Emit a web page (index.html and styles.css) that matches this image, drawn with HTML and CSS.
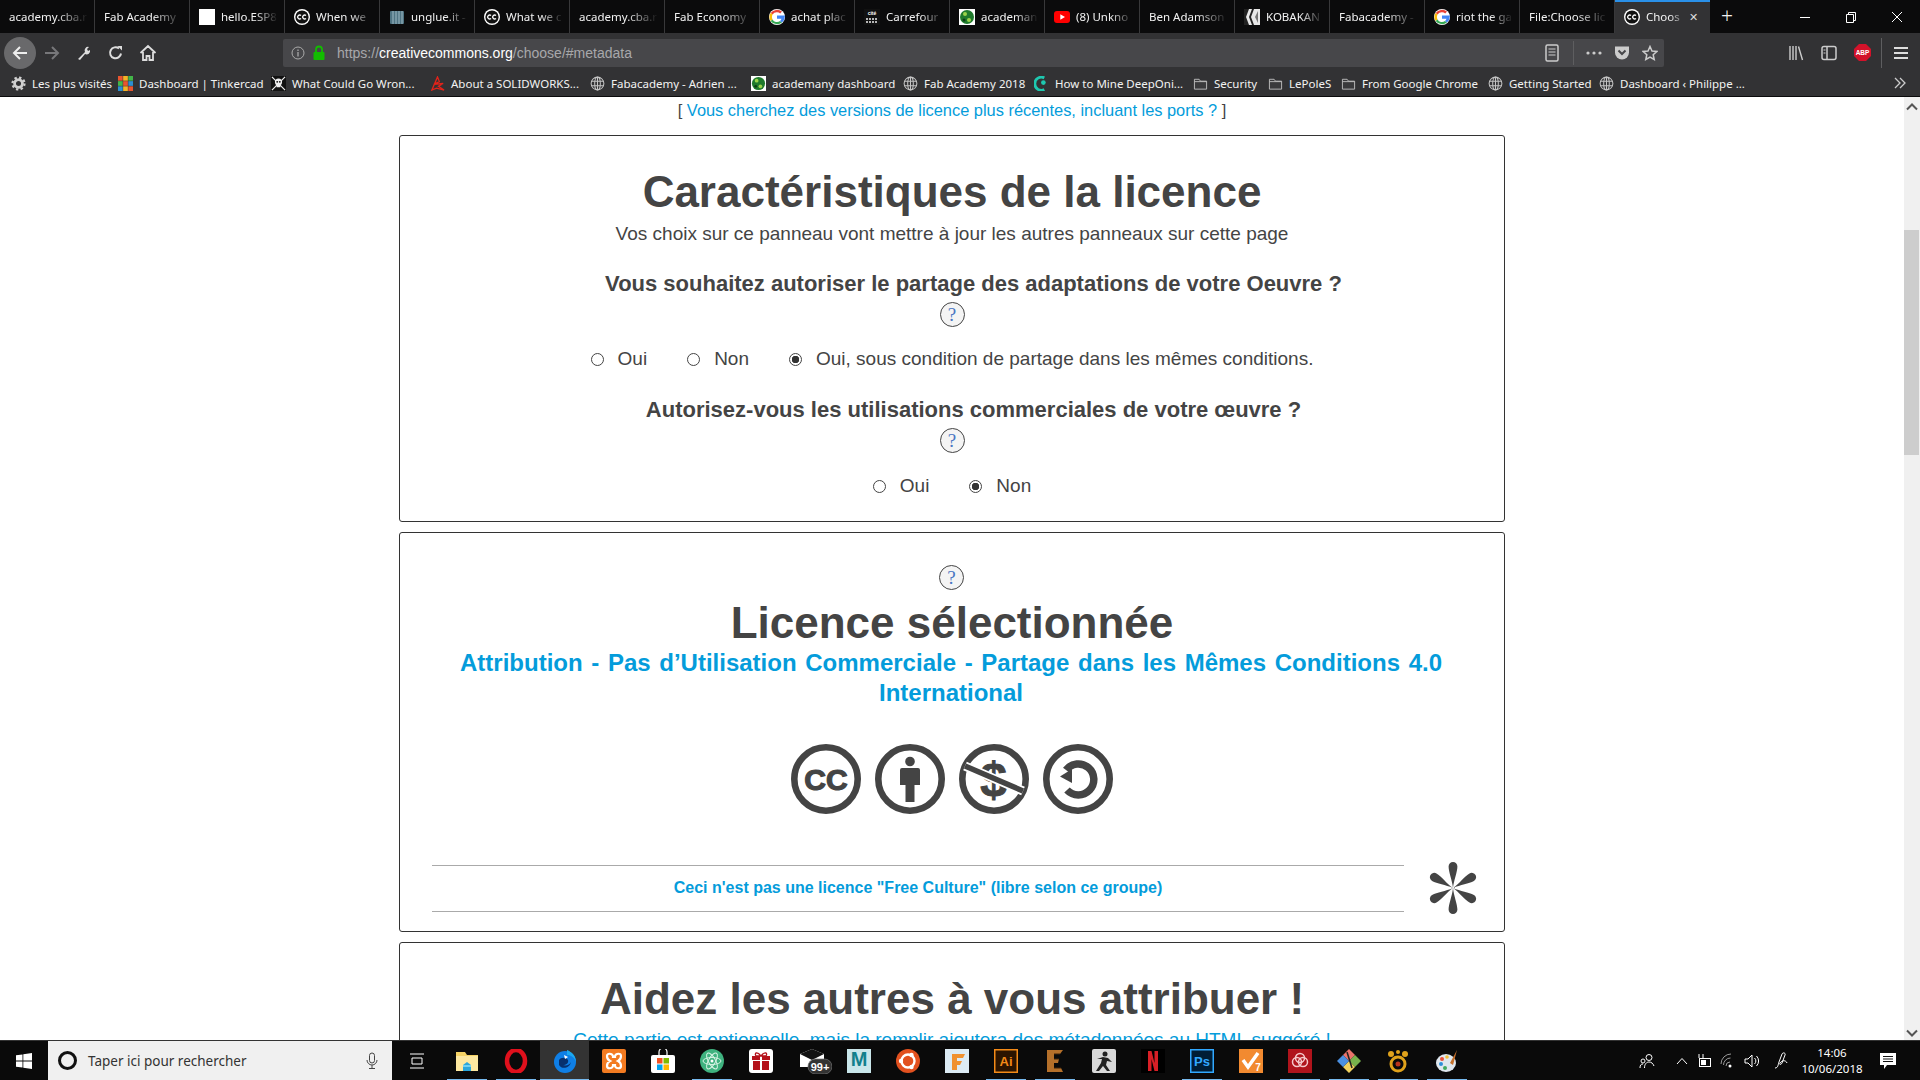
FILE: index.html
```html
<!DOCTYPE html>
<html lang="fr">
<head>
  <meta charset="UTF-8">
  <title>Choose a License</title>
  <link rel="stylesheet" href="styles.css">
</head>
<body>
  <svg class="sprites" xmlns="http://www.w3.org/2000/svg">
    <symbol id="i-cc" viewBox="0 0 16 16"><circle cx="8" cy="8" r="8" fill="#fff"/><circle cx="8" cy="8" r="6.600" fill="#111"/><path d="M7 6.500a2 2 0 1 0 0 3M12 6.500a2 2 0 1 0 0 3" fill="none" stroke="#fff" stroke-width="1.400"/></symbol>
    <symbol id="i-google" viewBox="0 0 16 16"><circle cx="8" cy="8" r="8" fill="#fff"/><path d="M8 3.200a4.800 4.800 0 0 1 3.200 1.200L13 2.600A8 8 0 0 0 1.600 4l2 1.600A4.800 4.800 0 0 1 8 3.200z" fill="#ea4335"/><path d="M3.600 5.600L1.600 4a8 8 0 0 0 0 8l2-1.600a4.800 4.800 0 0 1 0-4.800z" fill="#fbbc05"/><path d="M3.600 10.400l-2 1.600A8 8 0 0 0 13 13.400l-2-1.500a4.800 4.800 0 0 1-7.400-1.500z" fill="#34a853"/><path d="M15.800 6.500H8v3.200h4.500A4 4 0 0 1 11 11.900l2 1.500a8 8 0 0 0 2.800-6.900z" fill="#4285f4"/></symbol>
    <symbol id="i-globe" viewBox="0 0 16 16"><g fill="none" stroke="#c4c4c4" stroke-width="1.100"><circle cx="8" cy="8" r="6.800"/><ellipse cx="8" cy="8" rx="3" ry="6.800"/><path d="M1.500 5.500h13M1.500 10.500h13M8 1v14"/></g></symbol>
    <symbol id="i-folder" viewBox="0 0 16 16"><path d="M1.500 3.500h5l1.500 2h6.500v8.500h-13z" fill="#3a3a3c" stroke="#bdbdbd"/><path d="M1.500 6h13" stroke="#bdbdbd"/></symbol>
    <symbol id="i-gear" viewBox="0 0 16 16"><circle cx="8" cy="8" r="4.200" fill="none" stroke="#d0d0d0" stroke-width="3"/><circle cx="8" cy="8" r="6.400" fill="none" stroke="#d0d0d0" stroke-width="2.400" stroke-dasharray="2.500 2.500"/></symbol>
    <symbol id="i-tinker" viewBox="0 0 16 16"><rect width="5" height="5" fill="#e8552f"/><rect x="5.500" width="5" height="5" fill="#f5b325"/><rect x="11" width="5" height="5" fill="#43b649"/><rect y="5.500" width="5" height="5" fill="#43b649"/><rect x="5.500" y="5.500" width="5" height="5" fill="#e8552f"/><rect x="11" y="5.500" width="5" height="5" fill="#2c8fd1"/><rect y="11" width="5" height="5" fill="#2c8fd1"/><rect x="5.500" y="11" width="5" height="5" fill="#f5b325"/><rect x="11" y="11" width="5" height="5" fill="#e8552f"/></symbol>
    <symbol id="i-skull" viewBox="0 0 16 16"><rect width="16" height="16" fill="#111"/><circle cx="8" cy="6.500" r="3.800" fill="#eee"/><rect x="6" y="9" width="4" height="3" fill="#eee"/><path d="M1 1l14 14M15 1L1 15" stroke="#eee" stroke-width="1.300"/><circle cx="6.600" cy="6.200" r="1" fill="#111"/><circle cx="9.400" cy="6.200" r="1" fill="#111"/></symbol>
    <symbol id="i-solid" viewBox="0 0 16 16"><path d="M2 15L8 1l2 5-6 3 10-1-5 3 6 4-8-2z" fill="none" stroke="#e2231a" stroke-width="1.400"/></symbol>
    <symbol id="i-academany" viewBox="0 0 16 16"><rect width="16" height="16" fill="#fff"/><circle cx="8" cy="8" r="7" fill="#1f7a2c"/><circle cx="6" cy="5" r="2" fill="#9bd34a"/><circle cx="10" cy="11" r="2" fill="#9bd34a"/><circle cx="5" cy="11" r="1.500" fill="#0c3f16"/></symbol>
    <symbol id="i-deep" viewBox="0 0 16 16"><path d="M11 2A7 7 0 1 0 11 14.500" fill="none" stroke="#1ec8b0" stroke-width="3"/><circle cx="10" cy="7" r="2.500" fill="#1ec8b0"/></symbol>
    <symbol id="i-unglue" viewBox="0 0 16 16"><rect x="1" y="2" width="14" height="13" rx="1" fill="#4f7483"/><path d="M4 2v13M7 2v13M10 2v13M13 2v13" stroke="#9fb9c4"/></symbol>
    <symbol id="i-youtube" viewBox="0 0 16 16"><rect y="2" width="16" height="12" rx="3" fill="#f00"/><path d="M6.300 5.200L11 8l-4.700 2.800z" fill="#fff"/></symbol>
    <symbol id="i-koba" viewBox="0 0 16 16"><rect width="16" height="16" fill="#e8e8e8"/><path d="M0 0h5l-3 8 3 8H0zM8 0h2L7 8l3 8H8L5 8z" fill="#222"/><path d="M14 2L11 8l3 6z" fill="#777"/></symbol>

    <symbol id="t-folder" viewBox="0 0 24 24"><path d="M1 3h9l2 3h11v16H1z" fill="#f6d365"/><path d="M1 7h22v15H1z" fill="#fde8a0"/><path d="M8 22v-6l4-3 4 3v6z" fill="#2aa6dc"/><path d="M8 16h8v2H8z" fill="#6fd0f2"/></symbol>
    <symbol id="t-opera" viewBox="0 0 24 24"><ellipse cx="12" cy="12" rx="9" ry="11" fill="none" stroke="#e0101c" stroke-width="4.500"/></symbol>
    <symbol id="t-firefox" viewBox="0 0 24 24"><circle cx="12" cy="13" r="11" fill="#0f7fe6"/><path d="M14 1c5 2 9 6 9 12-2-5-5-7-9-7z" fill="#1ba9f0"/><path d="M6 11c2-3 7-3 9 0 1 3-2 5-5 5 3 1 7 0 8-3-1 6-9 8-12 3z" fill="#07306e"/><path d="M11 6l4 2-3 2z" fill="#fff"/></symbol>
    <symbol id="t-xampp" viewBox="0 0 24 24"><rect width="24" height="24" rx="2" fill="#f37b21"/><path d="M5 7c0-3 5-3 6 0v1h2V7c1-3 6-3 6 0 0 2-1 4-3 5 2 1 3 3 3 5 0 3-5 3-6 0v-1h-2v1c-1 3-6 3-6 0 0-2 1-4 3-5-2-1-3-3-3-5z" fill="none" stroke="#fff" stroke-width="2.200"/></symbol>
    <symbol id="t-store" viewBox="0 0 24 24"><path d="M8 6V3a4 4 0 0 1 8 0v3" fill="none" stroke="#fff" stroke-width="1.200"/><rect y="6" width="24" height="18" rx="2" fill="#fff"/><rect x="6" y="9" width="5.500" height="5.500" fill="#f25022"/><rect x="12.500" y="9" width="5.500" height="5.500" fill="#7fba00"/><rect x="6" y="15.500" width="5.500" height="5.500" fill="#00a4ef"/><rect x="12.500" y="15.500" width="5.500" height="5.500" fill="#ffb900"/></symbol>
    <symbol id="t-atom" viewBox="0 0 24 24"><circle cx="12" cy="12" r="12" fill="#3fb27f"/><g fill="none" stroke="#d7f3e4"><ellipse cx="12" cy="12" rx="9" ry="3.500"/><ellipse cx="12" cy="12" rx="9" ry="3.500" transform="rotate(60 12 12)"/><ellipse cx="12" cy="12" rx="9" ry="3.500" transform="rotate(120 12 12)"/></g><circle cx="12" cy="12" r="1.500" fill="#fff"/></symbol>
    <symbol id="t-gift" viewBox="0 0 24 24"><rect width="24" height="24" rx="3" fill="#fff"/><rect x="3" y="7" width="18" height="4" fill="#b5121b"/><rect x="4" y="12" width="16" height="9" fill="#b5121b"/><rect x="11" y="7" width="2" height="14" fill="#fff"/><path d="M12 7C8 2 5 4 7 7zM12 7c4-5 7-3 5 0z" fill="none" stroke="#b5121b" stroke-width="1.300"/></symbol>
    <symbol id="t-ubuntu" viewBox="0 0 24 24"><circle cx="12" cy="12" r="12" fill="#e2511f"/><circle cx="12" cy="12" r="6.500" fill="none" stroke="#fff" stroke-width="2.400"/><circle cx="5" cy="12" r="2.200" fill="#fff"/><circle cx="15.500" cy="6" r="2.200" fill="#fff"/><circle cx="15.500" cy="18" r="2.200" fill="#fff"/></symbol>
    <symbol id="t-fusion" viewBox="0 0 24 24"><rect width="24" height="24" fill="#dcebf4"/><path d="M7 21V5h13l-2 4h-6v3h5l-2 4h-3v5z" fill="#f0912f"/></symbol>
    <symbol id="t-e" viewBox="0 0 24 24"><path d="M4 1h16l-3 4h-6v5h5l-1 4h-4v5h7l2 4H4z" fill="#b5702a"/><path d="M11 5h6M11 10h5M11 19h7" stroke="#3e2208"/></symbol>
    <symbol id="t-zbrush" viewBox="0 0 24 24"><rect width="24" height="24" rx="2" fill="#d9d9d9"/><circle cx="13" cy="5" r="2.500" fill="#222"/><path d="M5 10l6-2 5 1 4 4-5-1-1 4 4 6h-3l-4-5-4 5H4l5-8 1-4z" fill="#222"/></symbol>
    <symbol id="t-netflix" viewBox="0 0 24 24"><rect width="24" height="24" fill="#000"/><path d="M7 2h3.500l3 12V2H17v20h-3.500l-3-12v12H7z" fill="#d81f26"/></symbol>
    <symbol id="t-adobe" viewBox="0 0 24 24"><rect width="24" height="24" fill="#b0141c"/><g fill="none" stroke="#f4c9cb" stroke-width="1.500"><circle cx="9" cy="13" r="4.500"/><circle cx="15" cy="13" r="4.500"/><circle cx="12" cy="9" r="4.500"/></g></symbol>
    <symbol id="t-git" viewBox="0 0 24 24"><path d="M12 0l6 6-6 6-6-6z" fill="#e9736b"/><path d="M18 6l6 6-6 6-6-6z" fill="#78b24d"/><path d="M12 12l6 6-6 6-6-6z" fill="#f2d25e"/><path d="M6 6l6 6-6 6-6-6z" fill="#4a90e2"/><path d="M10 3l5 16" stroke="#222" stroke-width="1.500"/></symbol>
    <symbol id="t-gimp" viewBox="0 0 24 24"><circle cx="12" cy="15" r="7" fill="none" stroke="#e0a21b" stroke-width="3"/><circle cx="12" cy="15" r="2.500" fill="#b8331c"/><circle cx="5" cy="5" r="3" fill="#e0a21b"/><circle cx="19" cy="5" r="3" fill="#e0a21b"/><circle cx="12" cy="3" r="2" fill="#e0a21b"/></symbol>
    <symbol id="t-paint" viewBox="0 0 24 24"><ellipse cx="11" cy="14" rx="10" ry="9" fill="#dfe7ee"/><circle cx="7" cy="10" r="2" fill="#e94f37"/><circle cx="6" cy="15" r="2" fill="#2f8fd8"/><circle cx="10" cy="19" r="2" fill="#41a85f"/><circle cx="12" cy="8" r="1.800" fill="#f2c037"/><path d="M22 1l-7 13 3 2z" fill="#c6702a"/></symbol>
  </svg>

  <header class="browser">
    <div class="tabstrip">
      <div class="tab"><span class="tab-label">academy.cba.r</span></div>
      <div class="tab"><span class="tab-label">Fab Academy</span></div>
      <div class="tab"><span class="favicon favicon-blank"></span><span class="tab-label">hello.ESP8</span></div>
      <div class="tab"><svg class="favicon"><use href="#i-cc"/></svg><span class="tab-label">When we</span></div>
      <div class="tab"><svg class="favicon"><use href="#i-unglue"/></svg><span class="tab-label">unglue.it -</span></div>
      <div class="tab"><svg class="favicon"><use href="#i-cc"/></svg><span class="tab-label">What we c</span></div>
      <div class="tab"><span class="tab-label">academy.cba.r</span></div>
      <div class="tab"><span class="tab-label">Fab Economy</span></div>
      <div class="tab"><svg class="favicon"><use href="#i-google"/></svg><span class="tab-label">achat plac</span></div>
      <div class="tab"><svg class="favicon" viewBox="0 0 16 16"><rect width="16" height="16" fill="#111"/><text x="8" y="6" class="fav-cite">cité</text><path d="M2 10h12M2 13h12" stroke="#eee" stroke-width="1.500" stroke-dasharray="2 1"/></svg><span class="tab-label">Carrefour</span></div>
      <div class="tab"><svg class="favicon"><use href="#i-academany"/></svg><span class="tab-label">academan</span></div>
      <div class="tab"><svg class="favicon"><use href="#i-youtube"/></svg><span class="tab-label">(8) Unkno</span></div>
      <div class="tab"><span class="tab-label">Ben Adamson</span></div>
      <div class="tab"><svg class="favicon"><use href="#i-koba"/></svg><span class="tab-label">KOBAKAN</span></div>
      <div class="tab"><span class="tab-label">Fabacademy -</span></div>
      <div class="tab"><svg class="favicon"><use href="#i-google"/></svg><span class="tab-label">riot the ga</span></div>
      <div class="tab"><span class="tab-label">File:Choose lic</span></div>
      <div class="tab tab-active"><svg class="favicon"><use href="#i-cc"/></svg><span class="tab-label">Choos</span><span class="tab-close">✕</span></div>
      <div class="tab-new">+</div>
      <div class="window-controls">
        <svg width="12" height="12" viewBox="0 0 12 12"><path d="M1 6.500h10" stroke="#fff"/></svg>
        <svg width="12" height="12" viewBox="0 0 12 12"><path d="M1.500 3.500h7v8h-7zM3.500 3.500v-2h7v8h-2" fill="none" stroke="#fff"/></svg>
        <svg width="12" height="12" viewBox="0 0 12 12"><path d="M1 1l10 10M11 1L1 11" stroke="#fff"/></svg>
      </div>
    </div>

    <div class="toolbar">
      <div class="nav-btn nav-back"><svg width="18" height="18" viewBox="0 0 18 18"><path d="M16 9H3M9 3L3 9l6 6" fill="none" stroke="#eee" stroke-width="2"/></svg></div>
      <div class="nav-btn"><svg width="18" height="18" viewBox="0 0 18 18"><path d="M2 9h13M9 3l6 6-6 6" fill="none" stroke="#77777a" stroke-width="2"/></svg></div>
      <div class="nav-btn"><svg width="16" height="16" viewBox="0 0 16 16"><path d="M2 14l7-7a3.500 3.500 0 0 1 4-5l-2 2 1 2 2-1a3.500 3.500 0 0 1-5 4l-5 6z" fill="#ddd"/></svg></div>
      <div class="nav-btn"><svg width="16" height="16" viewBox="0 0 16 16"><path d="M13 8.500A5.500 5.500 0 1 1 11 3.500" fill="none" stroke="#ddd" stroke-width="2"/><path d="M9.500 1H14v4.500z" fill="#ddd"/></svg></div>
      <div class="nav-btn"><svg width="18" height="18" viewBox="0 0 18 18"><path d="M1.500 9L9 2l7.500 7M4 8v8h3.500v-4h3v4H14V8" fill="none" stroke="#ddd" stroke-width="1.800"/></svg></div>

      <div class="urlbar">
        <svg class="url-info" width="14" height="14" viewBox="0 0 14 14"><circle cx="7" cy="7" r="6" fill="none" stroke="#aaa"/><path d="M7 6v4.500M7 3.500v1.500" stroke="#aaa" stroke-width="1.300"/></svg>
        <svg class="url-lock" width="14" height="16" viewBox="0 0 14 16"><path d="M4 7V4.500a3 3 0 0 1 6 0V7" fill="none" stroke="#12bc00" stroke-width="1.800"/><rect x="1.500" y="7" width="11" height="8" rx="1" fill="#12bc00"/></svg>
        <span class="url-text">https://<b>creativecommons.org</b>/choose/#metadata</span>
        <div class="url-actions">
          <svg width="14" height="18" viewBox="0 0 14 18"><rect x="1" y="1" width="12" height="16" rx="1.500" fill="none" stroke="#ccc" stroke-width="1.500"/><path d="M3.500 5h7M3.500 8h7M3.500 11h7" stroke="#ccc"/></svg>
          <span class="url-sep"></span>
          <svg width="16" height="4" viewBox="0 0 16 4"><circle cx="2" cy="2" r="1.600" fill="#ccc"/><circle cx="8" cy="2" r="1.600" fill="#ccc"/><circle cx="14" cy="2" r="1.600" fill="#ccc"/></svg>
          <svg width="16" height="16" viewBox="0 0 16 16"><path d="M1 1.500h14v6a7 7 0 0 1-14 0z" fill="#ccc"/><path d="M4.500 5.500L8 9l3.500-3.500" fill="none" stroke="#47474a" stroke-width="2"/></svg>
          <svg width="16" height="16" viewBox="0 0 16 16"><path d="M8 1.500l2 4.500 4.800.5-3.600 3.200 1 4.800L8 12l-4.200 2.500 1-4.800-3.600-3.200L6 6z" fill="none" stroke="#ccc" stroke-width="1.500"/></svg>
        </div>
      </div>

      <div class="toolbar-right">
        <div class="tool-btn"><svg width="16" height="16" viewBox="0 0 16 16"><path d="M2 1v14M5 1v14M8 1v14M10.500 1.500L14.500 15" stroke="#ccc" stroke-width="1.400"/></svg></div>
        <div class="tool-btn"><svg width="16" height="16" viewBox="0 0 16 16"><rect x="1" y="1.500" width="14" height="13" rx="2" fill="none" stroke="#ccc" stroke-width="1.500"/><path d="M6 2v12" stroke="#ccc" stroke-width="1.500"/><path d="M2.500 5h2M2.500 8h2" stroke="#ccc"/></svg></div>
        <div class="tool-btn"><svg width="17" height="17" viewBox="0 0 17 17"><path d="M5 0h7l5 5v7l-5 5H5l-5-5V5z" fill="#d3122a"/><text x="8.500" y="11" class="ico-abp">ABP</text></svg></div>
        <span class="tool-sep"></span>
        <div class="tool-btn"><svg width="14" height="12" viewBox="0 0 14 12"><path d="M0 1h14M0 6h14M0 11h14" stroke="#ddd" stroke-width="2"/></svg></div>
      </div>
    </div>

    <div class="bookmarks">
      <div class="bookmark"><svg class="bm-icon"><use href="#i-gear"/></svg>Les plus visités</div>
      <div class="bookmark"><svg class="bm-icon"><use href="#i-tinker"/></svg>Dashboard | Tinkercad</div>
      <div class="bookmark"><svg class="bm-icon"><use href="#i-skull"/></svg>What Could Go Wron...</div>
      <div class="bookmark"><svg class="bm-icon"><use href="#i-solid"/></svg>About a SOLIDWORKS...</div>
      <div class="bookmark"><svg class="bm-icon"><use href="#i-globe"/></svg>Fabacademy - Adrien ...</div>
      <div class="bookmark"><svg class="bm-icon"><use href="#i-academany"/></svg>academany dashboard</div>
      <div class="bookmark"><svg class="bm-icon"><use href="#i-globe"/></svg>Fab Academy 2018</div>
      <div class="bookmark"><svg class="bm-icon"><use href="#i-deep"/></svg>How to Mine DeepOni...</div>
      <div class="bookmark"><svg class="bm-icon"><use href="#i-folder"/></svg>Security</div>
      <div class="bookmark"><svg class="bm-icon"><use href="#i-folder"/></svg>LePoleS</div>
      <div class="bookmark"><svg class="bm-icon"><use href="#i-folder"/></svg>From Google Chrome</div>
      <div class="bookmark"><svg class="bm-icon"><use href="#i-globe"/></svg>Getting Started</div>
      <div class="bookmark"><svg class="bm-icon"><use href="#i-globe"/></svg>Dashboard ‹ Philippe ...</div>
      <svg class="bm-more" width="12" height="12" viewBox="0 0 12 12"><path d="M1 1l5 5-5 5M6 1l5 5-5 5" fill="none" stroke="#ccc" stroke-width="1.300"/></svg>
    </div>
  </header>

  <div class="viewport">
    <main class="page">
      <p class="older">[ <a href="#">Vous cherchez des versions de licence plus récentes, incluant les ports ?</a> ]</p>

      <section class="panel panel-features">
        <h1>Caractéristiques de la licence</h1>
        <p class="lead">Vos choix sur ce panneau vont mettre à jour les autres panneaux sur cette page</p>

        <h3 class="question">Vous souhaitez autoriser le partage des adaptations de votre Oeuvre ?</h3>
        <div class="help">?</div>
        <div class="choices">
          <label><input type="radio" name="adapt">Oui</label>
          <label><input type="radio" name="adapt">Non</label>
          <label><input type="radio" name="adapt" checked>Oui, sous condition de partage dans les mêmes conditions.</label>
        </div>

        <h3 class="question">Autorisez-vous les utilisations commerciales de votre œuvre ?</h3>
        <div class="help">?</div>
        <div class="choices choices-second">
          <label><input type="radio" name="comm">Oui</label>
          <label><input type="radio" name="comm" checked>Non</label>
        </div>
      </section>

      <section class="panel panel-selected">
        <div class="help">?</div>
        <h1>Licence sélectionnée</h1>
        <h2 class="license-name"><a href="#">Attribution - Pas d’Utilisation Commerciale - Partage dans les Mêmes Conditions 4.0 International</a></h2>

        <div class="cc-icons">
          <svg class="cc-icon" viewBox="0 0 70 70"><circle cx="35" cy="35" r="31.700" class="cc-ring"/><text x="35" y="46" class="cc-letters">CC</text></svg>
          <svg class="cc-icon" viewBox="0 0 70 70"><circle cx="35" cy="35" r="31.700" class="cc-ring"/><circle cx="35" cy="17.500" r="4.800" class="cc-fill"/><path d="M27 24h16a2 2 0 0 1 2 2v15h-5.500v17h-9V41H25V26a2 2 0 0 1 2-2z" class="cc-fill"/></svg>
          <svg class="cc-icon" viewBox="0 0 70 70"><circle cx="35" cy="35" r="31.700" class="cc-ring"/><text x="34.500" y="51.500" class="cc-dollar">$</text><path d="M6 22l58 25" class="cc-halo"/><path d="M6 22l58 25" class="cc-bar"/></svg>
          <svg class="cc-icon" viewBox="0 0 70 70"><circle cx="35" cy="35" r="31.700" class="cc-ring"/><path d="M23 26A15.500 15.500 0 1 1 24 46" class="cc-arc"/><path d="M17 32.500L29 25v14z" class="cc-fill"/></svg>
        </div>

        <div class="free-culture">
          <a class="free-culture-note" href="#">Ceci n'est pas une licence "Free Culture" (libre selon ce groupe)</a>
          <svg class="asterisk" width="48" height="52" viewBox="-24 -26 48 52">
            <path d="M0 0C.8-8 4.400-16 4.400-21.600a4.400 4.400 0 0 0-8.800 0C-4.400-16-.8-8 0 0z"/>
            <path transform="rotate(60)" d="M0 0C.8-8 4.400-16 4.400-21.600a4.400 4.400 0 0 0-8.800 0C-4.400-16-.8-8 0 0z"/>
            <path transform="rotate(120)" d="M0 0C.8-8 4.400-16 4.400-21.600a4.400 4.400 0 0 0-8.800 0C-4.400-16-.8-8 0 0z"/>
            <path transform="rotate(180)" d="M0 0C.8-8 4.400-16 4.400-21.600a4.400 4.400 0 0 0-8.800 0C-4.400-16-.8-8 0 0z"/>
            <path transform="rotate(240)" d="M0 0C.8-8 4.400-16 4.400-21.600a4.400 4.400 0 0 0-8.800 0C-4.400-16-.8-8 0 0z"/>
            <path transform="rotate(300)" d="M0 0C.8-8 4.400-16 4.400-21.600a4.400 4.400 0 0 0-8.800 0C-4.400-16-.8-8 0 0z"/>
          </svg>
        </div>
      </section>

      <section class="panel panel-attribution">
        <h1>Aidez les autres à vous attribuer !</h1>
        <p class="lead lead-link"><a href="#">Cette partie est optionnelle, mais la remplir ajoutera des métadonnées au HTML suggéré !</a></p>
      </section>
    </main>

    <aside class="scrollbar">
      <svg class="scroll-arrow" width="12" height="8" viewBox="0 0 12 8"><path d="M1 6.500l5-5 5 5" fill="none" stroke="#555" stroke-width="2"/></svg>
      <div class="scroll-thumb"></div>
      <svg class="scroll-arrow scroll-arrow-down" width="12" height="8" viewBox="0 0 12 8"><path d="M1 1.500l5 5 5-5" fill="none" stroke="#555" stroke-width="2"/></svg>
    </aside>
  </div>

  <footer class="taskbar">
    <div class="start"><svg width="16" height="16" viewBox="0 0 16 16"><path d="M0 2.300l6.500-.9v6.200H0zM7.300 1.300L16 0v7.600H7.300zM0 8.400h6.500v6.200L0 13.700zM7.300 8.400H16V16l-8.700-1.300z" fill="#fff"/></svg></div>
    <div class="search">
      <span class="cortana"></span>
      <span class="search-text">Taper ici pour rechercher</span>
      <svg class="search-mic" width="12" height="18" viewBox="0 0 12 18"><rect x="3.500" y="1" width="5" height="10" rx="2.500" fill="none" stroke="#444"/><path d="M1 8a5 5 0 0 0 10 0M6 13v3M3 16.500h6" fill="none" stroke="#444"/></svg>
    </div>
    <div class="taskview"><svg width="16" height="16" viewBox="0 0 16 16"><path d="M1 1h14M1 15h14M3 5h10v6H3z" fill="none" stroke="#fff"/></svg></div>
    <div class="tasks">
      <div class="task running"><svg class="task-icon"><use href="#t-folder"/></svg></div>
      <div class="task running"><svg class="task-icon"><use href="#t-opera"/></svg></div>
      <div class="task running current"><svg class="task-icon"><use href="#t-firefox"/></svg></div>
      <div class="task"><svg class="task-icon"><use href="#t-xampp"/></svg></div>
      <div class="task"><svg class="task-icon"><use href="#t-store"/></svg></div>
      <div class="task running"><svg class="task-icon"><use href="#t-atom"/></svg></div>
      <div class="task"><svg class="task-icon"><use href="#t-gift"/></svg></div>
      <div class="task"><svg class="task-mail" width="36" height="26" viewBox="0 0 36 26"><path d="M4 6l12-5 12 5v13H4z" fill="#fff"/><path d="M4 6l12-5 12 5-12 6z" fill="#111"/><rect x="12" y="11" width="24" height="15" rx="7.500" fill="#333" stroke="#777" stroke-width=".7"/><text x="24" y="22.500" class="mail-count">99+</text></svg></div>
      <div class="task"><svg class="task-icon" viewBox="0 0 24 24"><rect width="24" height="24" fill="#c9e6ea"/><text x="12" y="17" class="ico-maya">M</text></svg></div>
      <div class="task"><svg class="task-icon"><use href="#t-ubuntu"/></svg></div>
      <div class="task"><svg class="task-icon"><use href="#t-fusion"/></svg></div>
      <div class="task running"><svg class="task-icon" viewBox="0 0 24 24"><rect x=".75" y=".75" width="22.500" height="22.500" fill="#2b1400" stroke="#f48a17" stroke-width="1.500"/><text x="12" y="17" class="ico-app ico-ai">Ai</text></svg></div>
      <div class="task running"><svg class="task-icon"><use href="#t-e"/></svg></div>
      <div class="task"><svg class="task-icon"><use href="#t-zbrush"/></svg></div>
      <div class="task"><svg class="task-icon"><use href="#t-netflix"/></svg></div>
      <div class="task running"><svg class="task-icon" viewBox="0 0 24 24"><rect x=".75" y=".75" width="22.500" height="22.500" fill="#001e36" stroke="#31a8ff" stroke-width="1.500"/><text x="12" y="17" class="ico-app ico-ps">Ps</text></svg></div>
      <div class="task"><svg class="task-icon" viewBox="0 0 24 24"><rect width="24" height="24" fill="#f28a30"/><path d="M4 11l5 7L19 4" fill="none" stroke="#fff" stroke-width="3.500"/><text x="19" y="22" class="ico-v7">7</text></svg></div>
      <div class="task running"><svg class="task-icon"><use href="#t-adobe"/></svg></div>
      <div class="task running"><svg class="task-icon"><use href="#t-git"/></svg></div>
      <div class="task running"><svg class="task-icon"><use href="#t-gimp"/></svg></div>
      <div class="task running"><svg class="task-icon"><use href="#t-paint"/></svg></div>
    </div>
    <div class="tray">
      <svg width="16" height="16" viewBox="0 0 16 16"><g fill="none" stroke="#fff"><circle cx="10" cy="4.500" r="3"/><path d="M5.500 15c0-4 2-6 4.500-6s4 1.500 5 4"/><circle cx="4" cy="8" r="2"/><path d="M1 15c0-3 1-4 3-4"/></g></svg>
      <svg class="tray-caret" width="12" height="8" viewBox="0 0 12 8"><path d="M1 7l5-5.500L11 7" fill="none" stroke="#fff"/></svg>
      <svg class="tray-icon" width="16" height="14" viewBox="0 0 16 14"><rect x="3.500" y="4.500" width="11" height="8" fill="none" stroke="#fff"/><rect x="5" y="6" width="5" height="5" fill="#fff"/><path d="M3 0v4M7 0v4" stroke="#fff"/></svg>
      <svg class="tray-icon" width="16" height="16" viewBox="0 0 16 16"><g fill="none" stroke="#999"><path d="M1 11a10 10 0 0 1 10-10M3.500 12a7 7 0 0 1 7-7M6 13a4 4 0 0 1 4-4"/></g><circle cx="10" cy="13" r="1.500" fill="#fff"/></svg>
      <svg class="tray-icon" width="16" height="16" viewBox="0 0 16 16"><path d="M1 6h3l4-4v12l-4-4H1z" fill="none" stroke="#fff"/><path d="M10.500 5a4 4 0 0 1 0 6M12.500 3a7 7 0 0 1 0 10" fill="none" stroke="#fff"/></svg>
      <svg class="tray-icon tray-pen" width="16" height="18" viewBox="0 0 16 18"><path d="M2 16c3 0 3-3 4-6l3-8c1-2 4-1 3 1L9 11c-1 2-3 2-2 0 2-3 6-3 7 0" fill="none" stroke="#fff"/></svg>
      <div class="clock"><span>14:06</span><span>10/06/2018</span></div>
      <svg class="tray-notif" width="18" height="18" viewBox="0 0 18 18"><path d="M1 1h16v12H8l-3 4v-4H1z" fill="#fff"/><path d="M4 4.500h10M4 7h10M4 9.500h10" stroke="#111"/></svg>
    </div>
  </footer>
</body>
</html>
```

FILE: styles.css
```css
* {
  box-sizing: border-box;
}

html, body {
  height: 100%;
}

body {
  margin: 0;
  display: flex;
  flex-direction: column;
  overflow: hidden;
  background: #fff;
  color: #444;
  font-family: "Liberation Sans", Arial, sans-serif;
}

.sprites {
  width: 0;
  height: 0;
  display: block;
}

/* browser chrome */
.browser {
  flex: none;
  font-family: "Noto Sans", sans-serif;
  font-size: 11.5px;
  color: #f2f2f2;
}

.tabstrip {
  display: flex;
  height: 33px;
  background: #0b0b0c;
}

.tab {
  width: 95px;
  display: flex;
  align-items: center;
  padding: 0 6px 0 9px;
  border-right: 1px solid #38383a;
}

.tab-label {
  flex: 1;
  min-width: 0;
  white-space: nowrap;
  -webkit-mask-image: linear-gradient(to right, #000 60%, transparent 100%);
  mask-image: linear-gradient(to right, #000 60%, transparent 100%);
}

.favicon {
  flex: none;
  width: 16px;
  height: 16px;
  margin-right: 6px;
}

.favicon-blank {
  background: #fff;
}

.tab-active {
  padding-right: 10px;
  background: #323234;
  border-top: 2px solid #2a90e8;
  border-right: none;
  padding-bottom: 2px;
}

.tab-close {
  flex: none;
  width: 14px;
  font-size: 11px;
  text-align: center;
  color: #ddd;
}

.tab-new {
  width: 34px;
  text-align: center;
  font-size: 21px;
  line-height: 32px;
  font-weight: 300;
}

.window-controls {
  margin-left: auto;
  display: flex;
  align-items: center;
  gap: 34px;
  padding-right: 17px;
}

.toolbar {
  display: flex;
  align-items: center;
  height: 37px;
  padding: 2px 0 0 4px;
  background: #323234;
}

.nav-btn {
  width: 32px;
  height: 32px;
  display: flex;
  align-items: center;
  justify-content: center;
  border-radius: 50%;
}

.nav-back {
  background: #69696b;
}

.urlbar {
  width: 1381px;
  height: 28px;
  margin-left: 119px;
  display: flex;
  align-items: center;
  padding-left: 8px;
  background: #47474a;
  border-radius: 2px;
  font-family: "Liberation Sans", sans-serif;
  font-size: 14px;
  color: #a8a8aa;
}

.url-lock {
  margin-left: 7px;
}

.url-text {
  margin-left: 11px;
}

.url-text b {
  font-weight: normal;
  color: #fff;
}

.url-actions {
  margin-left: auto;
  display: flex;
  align-items: center;
  gap: 12px;
  padding-right: 6px;
}

.url-sep {
  width: 1px;
  height: 24px;
  margin-left: 2px;
  background: #5e5e60;
}

.toolbar-right {
  margin-left: auto;
  display: flex;
  align-items: center;
  gap: 5px;
  padding-right: 5px;
}

.tool-btn {
  width: 28px;
  display: flex;
  justify-content: center;
}

.tool-sep {
  width: 1px;
  height: 30px;
  background: #5e5e60;
}

.bookmarks {
  display: grid;
  grid-template-columns: 107px 153px 159px 160px 161px 152px 131px 159px 75px 73px 147px 111px 1fr 40px;
  align-items: center;
  height: 27px;
  padding-left: 11px;
  background: #323234;
  border-bottom: 1px solid #0b0b0c;
}

.bookmark {
  display: flex;
  align-items: center;
  white-space: nowrap;
}

.bm-icon {
  flex: none;
  width: 15px;
  height: 15px;
  margin-right: 6px;
}

.bm-more {
  justify-self: end;
  margin-right: 14px;
}

/* page */
.viewport {
  flex: 1;
  min-height: 0;
  display: flex;
}

.page {
  flex: 1;
  min-width: 0;
  overflow: hidden;
  padding-left: 399px;
  text-align: center;
  font-size: 16.4px;
}

a {
  color: #049cdb;
  text-decoration: none;
}

.older {
  width: 1106px;
  height: 38px;
  margin: 0;
  padding-top: 4px;
  line-height: 18px;
}

.panel {
  width: 1106px;
  margin-bottom: 10px;
  border: 1px solid #333;
  border-radius: 3px;
}

.panel h1 {
  margin: 0;
  font-size: 44px;
  line-height: 50px;
  font-weight: bold;
}

.panel-features {
  height: 387px;
  padding-top: 31px;
}

.panel-selected {
  height: 400px;
  padding: 32px 25px 0 32px;
}

.panel-attribution {
  padding-top: 31px;
  height: 200px;
}

.lead {
  margin: 6px 0 0;
  font-size: 19px;
  line-height: 22px;
}

.lead-link {
  margin-top: 5px;
}

.question {
  margin: 26px 0 0;
  padding-left: 43px;
  font-size: 22px;
  line-height: 26px;
  font-weight: bold;
}

.choices + .question {
  margin-top: 27px;
}

.help {
  width: 25px;
  height: 25px;
  margin: 5px auto 0;
  border: 1px solid #444;
  border-radius: 50%;
  background: #f4f4f4;
  color: #4a76c2;
  font-family: "Liberation Serif", serif;
  font-size: 19px;
  line-height: 23px;
  text-align: center;
}

.panel-selected .help {
  margin: 0 0 0 507px;
}

.panel-selected h1 {
  margin-top: 8px;
  margin-left: -7px;
}

.choices {
  display: flex;
  justify-content: center;
  gap: 40px;
  margin-top: 21px;
  font-size: 19px;
  line-height: 22px;
}

.choices-second {
  margin-top: 22px;
}

.choices label {
  display: flex;
  align-items: center;
}

.choices input {
  appearance: none;
  width: 13px;
  height: 13px;
  margin: 0 14px 0 0;
  border: 1px solid #444;
  border-radius: 50%;
  background: #fff;
}

.choices input:checked {
  background: radial-gradient(circle, #333 0 3.500px, #fff 4px);
}

.license-name {
  width: 982px;
  margin: 0 0 0 28px;
  font-size: 24px;
  line-height: 29.500px;
  font-weight: bold;
  text-align: justify;
  text-align-last: center;
}

.cc-icons {
  display: flex;
  justify-content: center;
  gap: 14px;
  margin-top: 37px;
  margin-left: -8px;
}

.cc-icon {
  width: 70px;
  height: 70px;
}

.cc-ring {
  fill: none;
  stroke: #444;
  stroke-width: 6.600;
}

.cc-fill {
  fill: #444;
}

.cc-letters {
  fill: #444;
  font-family: "Liberation Sans", sans-serif;
  font-size: 30px;
  font-weight: bold;
  text-anchor: middle;
  stroke: #444;
  stroke-width: 1.200;
}

.cc-dollar {
  fill: #444;
  stroke: #444;
  stroke-width: 1;
  font-family: "Liberation Sans", sans-serif;
  font-size: 48px;
  font-weight: bold;
  text-anchor: middle;
}

.cc-halo {
  stroke: #fff;
  stroke-width: 9;
}

.cc-bar {
  stroke: #444;
  stroke-width: 5.500;
}

.cc-arc {
  fill: none;
  stroke: #444;
  stroke-width: 7.500;
}

.free-culture {
  display: flex;
  align-items: center;
  margin-top: 48px;
}

.free-culture-note {
  width: 972px;
  height: 47px;
  border-top: 1px solid #aaa;
  border-bottom: 1px solid #aaa;
  font-size: 16px;
  font-weight: bold;
  line-height: 44px;
}

.asterisk {
  margin-left: 25px;
  fill: #444;
}

/* scrollbar */
.scrollbar {
  flex: none;
  width: 16px;
  display: flex;
  flex-direction: column;
  align-items: flex-start;
  padding-top: 6px;
  background: #f0f0f0;
}

.scroll-arrow {
  margin-left: 2px;
}

.scroll-thumb {
  width: 15px;
  height: 225px;
  margin-top: 119px;
  background: #cdcdcd;
}

.scroll-arrow-down {
  margin-top: auto;
  margin-bottom: 3px;
}

/* taskbar */
.taskbar {
  flex: none;
  height: 40px;
  display: flex;
  align-items: center;
  background: #0a0a0a;
  border-top: 1px solid #333;
  color: #fff;
  font-family: "Noto Sans", sans-serif;
}

.start {
  width: 48px;
  display: flex;
  justify-content: center;
}

.search {
  width: 344px;
  height: 40px;
  display: flex;
  align-items: center;
  padding-left: 10px;
  background: #f0f0f0;
  color: #333;
  font-size: 13.500px;
}

.cortana {
  width: 19px;
  height: 19px;
  border: 3px solid #111;
  border-radius: 50%;
}

.search-text {
  margin-left: 11px;
}

.search-mic {
  margin-left: auto;
  margin-right: 14px;
}

.taskview {
  width: 50px;
  display: flex;
  justify-content: center;
}

.tasks {
  display: flex;
}

.task {
  width: 49px;
  height: 40px;
  display: flex;
  align-items: center;
  justify-content: center;
}

.task.running {
  background: linear-gradient(#76b9ed, #76b9ed) no-repeat center bottom / 40px 2px;
}

.task.current {
  background: linear-gradient(#76b9ed, #76b9ed) no-repeat center bottom / 100% 2px, #333;
}

.task-icon {
  width: 24px;
  height: 24px;
}

.task-mail {
  flex: none;
  margin-left: 8px;
}

.tray {
  margin-left: auto;
  display: flex;
  align-items: center;
  padding-right: 23px;
}

.tray-caret {
  margin-left: 21px;
}

.tray-icon {
  margin-left: 8px;
}

.tray-pen {
  margin-left: 13px;
}

.clock {
  width: 78px;
  margin-left: 4px;
  display: flex;
  flex-direction: column;
  align-items: center;
  gap: 1px;
  font-size: 11.500px;
  line-height: 15px;
}

.tray-notif {
  margin-left: 8px;
}

/* text inside svg icons */
.fav-cite {
  fill: #fff;
  font: bold 5px "Liberation Sans", sans-serif;
  text-anchor: middle;
}

.ico-app {
  font: bold 13px "Liberation Sans", sans-serif;
  text-anchor: middle;
}

.ico-ai {
  fill: #f48a17;
}

.ico-ps {
  fill: #31a8ff;
}

.ico-maya {
  fill: #12808c;
  font: bold 20px "Liberation Sans", sans-serif;
  text-anchor: middle;
}

.ico-v7 {
  fill: #fff;
  font: bold 10px "Liberation Sans", sans-serif;
  text-anchor: middle;
}

.ico-abp {
  fill: #fff;
  font: bold 6.500px "Liberation Sans", sans-serif;
  text-anchor: middle;
}

.mail-count {
  fill: #fff;
  font: bold 11px "Liberation Sans", sans-serif;
  text-anchor: middle;
}
```
